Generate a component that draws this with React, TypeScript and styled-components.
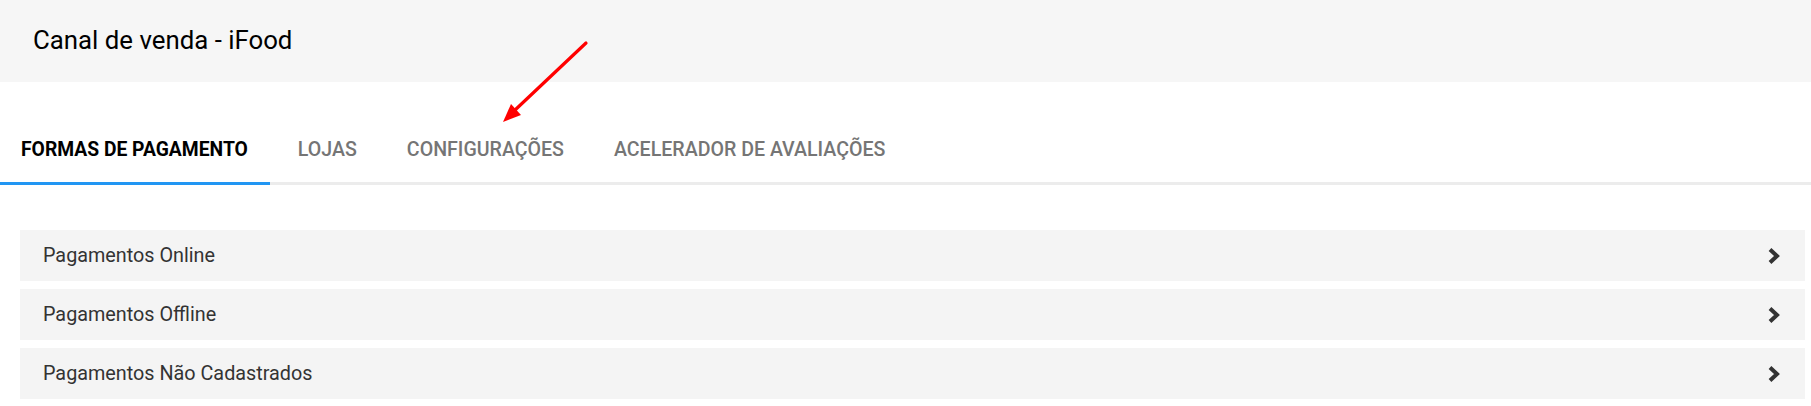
import React from "react";
import styled, { createGlobalStyle } from "styled-components";

const GlobalStyle = createGlobalStyle`
  html, body {
    margin: 0;
    padding: 0;
    background: #fff;
    font-family: Roboto, "Liberation Sans", Arial, sans-serif;
  }
`;

const Page = styled.div`
  position: relative;
  width: 100%;
  min-height: 406px;
`;

const Header = styled.header`
  height: 82px;
  display: flex;
  align-items: center;
  padding: 0 0 2px 33px;
  box-sizing: border-box;
  background: #f6f6f6;

  h1 {
    margin: 0;
    font-size: 25.8px;
    font-weight: 400;
    color: #000;
  }
`;

const TabBar = styled.nav`
  display: flex;
  gap: 7px;
  margin-top: 35px;
  border-bottom: 3px solid #ececec;
`;

const Tab = styled.button<{ $active?: boolean }>`
  box-sizing: border-box;
  height: 68px;
  margin-bottom: -3px;
  padding: 0 22px 0 21px;
  border: 0;
  border-bottom: 3px solid ${(p) => (p.$active ? "#2196f3" : "transparent")};
  background: none;
  font-family: inherit;
  font-size: ${(p) => (p.$active ? "19.3px" : "19.6px")};
  font-weight: ${(p) => (p.$active ? 700 : 500)};
  text-transform: uppercase;
  color: ${(p) => (p.$active ? "#000" : "#757575")};
  cursor: pointer;
`;

const List = styled.ul`
  list-style: none;
  margin: 0;
  padding: 45px 6px 0 20px;
  display: flex;
  flex-direction: column;
  gap: 8px;
`;

const Row = styled.li`
  height: 51px;
  display: flex;
  align-items: center;
  justify-content: space-between;
  padding: 0 24px 0 23px;
  background: #f4f4f4;
  font-size: 19.8px;
  color: #333;
  cursor: pointer;
`;

const Chevron = () => (
  <svg width="14" height="18" viewBox="0 0 14 18">
    <path d="M3 2.5 L10 9 L3 15.5" fill="none" stroke="#333" strokeWidth="4" strokeLinejoin="miter" />
  </svg>
);

const Annotation = styled.svg`
  position: absolute;
  left: 0;
  top: 0;
  pointer-events: none;
`;

const tabs = ["Formas de pagamento", "Lojas", "Configurações", "Acelerador de avaliações"];
const payments = ["Pagamentos Online", "Pagamentos Offline", "Pagamentos Não Cadastrados"];

const App = () => {
  return (
    <Page>
      <GlobalStyle />
      <Header>
        <h1>Canal de venda - iFood</h1>
      </Header>
      <TabBar>
        {tabs.map((t, i) => (
          <Tab key={t} $active={i === 0}>
            {t}
          </Tab>
        ))}
      </TabBar>
      <List>
        {payments.map((p) => (
          <Row key={p}>
            <span>{p}</span>
            <Chevron />
          </Row>
        ))}
      </List>
      <Annotation width="700" height="140">
        <line x1="586" y1="43" x2="514" y2="111" stroke="#f00" strokeWidth="3.2" strokeLinecap="round" />
        <polygon points="503,122 521,115 511,104" fill="#f00" />
      </Annotation>
    </Page>
  );
};

export default App;
